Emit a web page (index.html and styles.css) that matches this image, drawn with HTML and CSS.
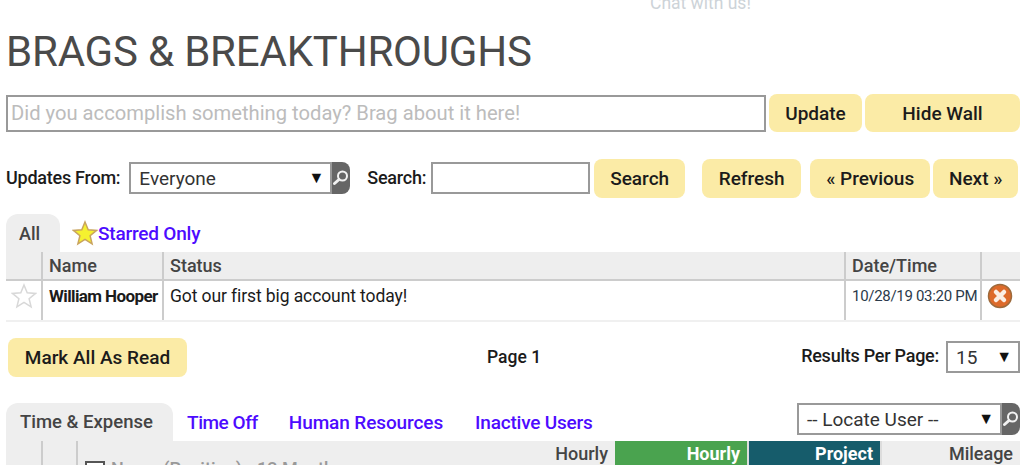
FILE: index.html
```html
<!DOCTYPE html>
<html lang="en">
<head>
<meta charset="utf-8">
<title>Brags &amp; Breakthroughs</title>
<link rel="stylesheet" href="styles.css">
</head>
<body>
<div class="chat-row"><span class="chat">Chat with us!</span></div>
<h1 class="title">BRAGS &amp; BREAKTHROUGHS</h1>
<div class="brag-row">
  <div class="brag-input">Did you accomplish something today? Brag about it here!</div>
  <button class="btn btn-update">Update</button>
  <button class="btn btn-hide">Hide Wall</button>
</div>
<div class="filter-row">
  <span class="label">Updates From:</span>
  <div class="select-group select-everyone">
    <div class="select"><span>Everyone</span><span class="arrow">▼</span></div>
    <span class="lens"><svg viewBox="0 0 18 32" width="18" height="32"><circle cx="10.500" cy="14" r="4.500" fill="none" stroke="#f2f2f2" stroke-width="2"/><path d="M7 17.500 2.500 21.500" stroke="#f2f2f2" stroke-width="3" stroke-linecap="round"/></svg></span>
  </div>
  <span class="label label-search">Search:</span>
  <div class="search-box"></div>
  <button class="btn btn-search">Search</button>
  <button class="btn btn-refresh">Refresh</button>
  <button class="btn btn-prev">« Previous</button>
  <button class="btn btn-next">Next »</button>
</div>
<div class="tabs">
  <span class="tab active tab-all">All</span>
  <svg class="star-icon" viewBox="0 0 26 26" width="26" height="26"><path d="M13 2 16.200 9.800 24.500 10.400 18.100 15.700 20.100 23.800 13 19.400 5.900 23.800 7.900 15.700 1.500 10.400 9.800 9.800Z" fill="#f5f12f" stroke="#c9a45e" stroke-width="1.500"/></svg>
  <a class="tab-link tab-starred">Starred Only</a>
</div>
<div class="wall">
  <div class="wall-row wall-head">
    <div class="cell"></div><div class="cell">Name</div><div class="cell">Status</div><div class="cell">Date/Time</div><div class="cell last"></div>
  </div>
  <div class="wall-row wall-body">
    <div class="cell"><svg viewBox="0 0 26 26" width="26" height="26"><path d="M13 2 16.200 9.800 24.500 10.400 18.100 15.700 20.100 23.800 13 19.400 5.900 23.800 7.900 15.700 1.500 10.400 9.800 9.800Z" fill="#fff" stroke="#d8d8d8" stroke-width="1.500"/></svg></div>
    <div class="cell name">William Hooper</div>
    <div class="cell">Got our first big account today!</div>
    <div class="cell date">10/28/19 03:20 PM</div>
    <div class="cell last"><svg viewBox="0 0 26 26" width="26" height="26"><circle cx="13" cy="13" r="11.500" fill="#dd6a2a" stroke="#9c6a3c" stroke-width="1.500"/><path d="M9 9 17 17M17 9 9 17" stroke="#fbeee4" stroke-width="4.500" stroke-linecap="round"/></svg></div>
  </div>
</div>
<div class="pager">
  <button class="btn btn-mark">Mark All As Read</button>
  <span class="page-no">Page 1</span>
  <div class="per-page"><span class="label">Results Per Page:</span><div class="select select-small"><span>15</span><span class="arrow">▼</span></div></div>
</div>
<div class="tabs tabs-lower">
  <span class="tab active tab-time">Time &amp; Expense</span>
  <a class="tab-link tab-off">Time Off</a>
  <a class="tab-link tab-hr">Human Resources</a>
  <a class="tab-link tab-inactive">Inactive Users</a>
  <div class="select-group select-locate">
    <div class="select"><span>-- Locate User --</span><span class="arrow">▼</span></div>
    <span class="lens"><svg viewBox="0 0 18 32" width="18" height="32"><circle cx="10.500" cy="14" r="4.500" fill="none" stroke="#f2f2f2" stroke-width="2"/><path d="M7 17.500 2.500 21.500" stroke="#f2f2f2" stroke-width="3" stroke-linecap="round"/></svg></span>
  </div>
</div>
<div class="grid-head">
  <div class="gh gh-check"></div>
  <div class="gh gh-check2"></div>
  <div class="gh gh-name"><span class="checkbox"></span><span class="faded">Name (Position) - 12 Months</span></div>
  <div class="gh gh-rate">Hourly</div>
  <div class="gh gh-green">Hourly</div>
  <div class="gh gh-teal">Project</div>
  <div class="gh gh-mile">Mileage</div>
</div>
</body>
</html>
```
FILE: styles.css
```css
* { box-sizing: border-box; }
html, body { margin: 0; padding: 0; }
body {
  width: 1024px;
  height: 465px;
  overflow: hidden;
  background: #fff;
  font-family: Roboto, "Liberation Sans", sans-serif;
  font-size: 18px;
  color: #1b1b1b;
  padding: 0 4px 0 6px;
}
.chat-row { height: 11px; padding-left: 644px; overflow: hidden; display: flex; align-items: flex-end; }
.chat { font-size: 17.500px; line-height: 20px; color: #cdd3d8; margin-bottom: -2px; white-space: nowrap; }
.title { margin: 18px 0 0; font-size: 42px; line-height: 46px; font-weight: 400; color: #4a4a4a; letter-spacing: -0.2px; white-space: nowrap; }
.brag-row { display: flex; align-items: center; margin-top: 19px; height: 38px; }
.brag-input {
  width: 760px; height: 37px; border: 2px solid #999; padding: 0 3px;
  font-size: 20.200px; line-height: 33px; color: #bcbcbc; white-space: nowrap;
}
.btn {
  border: 0; border-radius: 8px; background: #fbeba6; color: #1b1b1b;
  font-family: inherit; font-size: 19px; font-weight: 500; padding: 0;
  height: 38px;
}
.btn-update { width: 93px; margin-left: 3px; }
.btn-hide { width: 155px; margin-left: 3px; }
.filter-row { display: flex; align-items: center; margin-top: 27px; height: 39px; }
.filter-row .btn { height: 39px; }
.filter-row .select-group, .filter-row .search-box { margin-top: -1px; }
.filter-row .label { margin-top: -3px; }
.label { font-size: 18px; font-weight: 500; letter-spacing: -0.25px; white-space: nowrap; }
.select-group { display: flex; }
.select-everyone { margin-left: 9px; width: 221px; flex: none; }
.select {
  flex: 1; height: 32px; border: 2px solid #999; display: flex; align-items: center;
  justify-content: space-between; padding: 0 6px 0 8px; font-size: 19px; color: #333; white-space: nowrap;
}
.arrow { font-size: 16px; line-height: 20px; color: #111; }
.lens { width: 18px; height: 32px; background: #666; border-radius: 0 8px 8px 0; display: block; flex: none; }
.lens svg { display: block; }
.label-search { margin-left: 17px; }
.search-box { width: 159px; height: 32px; border: 2px solid #999; margin-left: 5px; flex: none; }
.btn-search { width: 91px; margin-left: 4px; }
.btn-refresh { width: 99px; margin-left: 17px; }
.btn-prev { width: 120px; margin-left: 9px; }
.btn-next { width: 85px; margin-left: 3px; }
.tabs { display: flex; align-items: center; height: 38px; margin-top: 16px; }
.tab { background: #eee; border-radius: 12px 12px 0 0; height: 38px; display: flex; align-items: center; font-weight: 500; color: #444; }
.tab-all { width: 54px; padding-left: 13px; }
.star-icon { margin-left: 12px; flex: none; }
.tab-link { color: #4d0bff; font-weight: 500; white-space: nowrap; font-size: 19px; letter-spacing: -0.2px; }
.wall-row { display: grid; grid-template-columns: 37px 121px 682px 136px 38px; }
.wall-head { background: #eee; height: 29px; font-weight: 500; color: #444; border-bottom: 2px solid #ccc; }
.wall-body { height: 41px; border-bottom: 2px solid #f0f0f0; }
.cell { border-right: 2px solid #ccc; padding-left: 6px; line-height: 27px; white-space: nowrap; }
.cell.last { border-right: 0; }
.wall-body .cell { padding-top: 2px; font-size: 17.500px; letter-spacing: -0.1px; }
.wall-body .cell svg { display: block; margin: 0 0 0 -1px; }
.wall-body .name { font-size: 17px; font-weight: 700; letter-spacing: -0.6px; }
.wall-body .date { font-size: 15px; letter-spacing: -0.3px; color: #2b3a4a; }
.pager { display: flex; align-items: center; justify-content: space-between; height: 40px; margin-top: 15px; padding-left: 2px; position: relative; }
.btn-mark { width: 179px; height: 39px; }
.page-no { font-weight: 500; font-size: 17.500px; position: absolute; left: 481px; top: 10px; }
.per-page { display: flex; align-items: center; gap: 7px; }
.per-page .label { margin-top: -3px; }
.select-small { flex: none; width: 74px; height: 32px; }
.tabs-lower { margin-top: 26px; position: relative; }
.tab-time { width: 167px; padding-left: 14px; font-size: 18.500px; white-space: nowrap; }
.tab-off { margin-left: 14px; letter-spacing: -0.45px; }
.tab-hr { margin-left: 31px; letter-spacing: -0.1px; }
.tab-inactive { margin-left: 32px; }
.select-locate { position: absolute; left: 791px; top: 0; width: 223px; }
.grid-head { display: grid; grid-template-columns: 37px 35px 400px 137px 134px 133px 138px; height: 24px; overflow: hidden; background: #eee; font-weight: 500; color: #444; width: 1014px; line-height: 26px; }
.gh { text-align: right; padding-right: 7px; white-space: nowrap; overflow: hidden; }
.gh-check, .gh-check2 { border-right: 2px solid #ccc; height: 24px; }
.gh-name { text-align: left; padding-left: 7px; display: flex; align-items: flex-start; gap: 6px; }
.checkbox { width: 20px; height: 18px; border: 2px solid #555; background: #fff; margin-top: 20px; flex: none; }
.faded { color: #999; margin-top: 15px; }
.gh-green { background: #4aa34f; color: #fff; font-weight: 700; border-right: 2px solid #ddd; }
.gh-teal { background: #165c6b; color: #fff; font-weight: 700; border-right: 2px solid #ddd; }
.gh-mile { padding-right: 7px; }
```
